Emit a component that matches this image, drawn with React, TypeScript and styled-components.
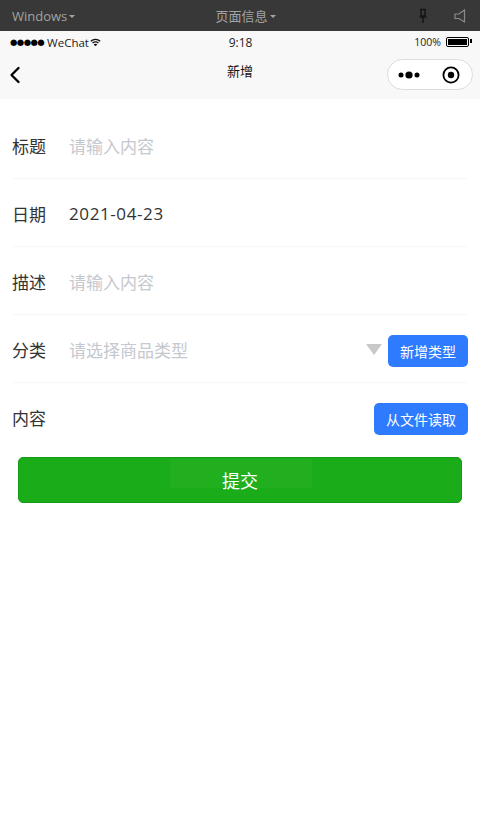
import React from 'react';
import { createGlobalStyle, styled } from 'styled-components';
import { ChevronLeft } from 'lucide-react';

const FONT = '"Open Sans", "Noto Sans CJK SC", sans-serif';

const GlobalStyle = createGlobalStyle`
  html, body {
    margin: 0;
    background: #ffffff;
    font-family: ${FONT};
  }
`;

// =============================================================================
// Main Component
// =============================================================================

export default function App() {
  return (
    <Page>
      <GlobalStyle />
      <Toolbar>
        <ToolbarMenu>
          Windows <Caret />
        </ToolbarMenu>
        <ToolbarTitle>
          页面信息 <Caret />
        </ToolbarTitle>
        <ToolbarIcons>
          <svg width="12" height="16" viewBox="0 0 12 16" fill="none" stroke="#141414" strokeWidth="1.4">
            <path d="M3 1.5h6M4 1.5v6.5M8 1.5v6.5M2.5 9h7M4 8h4M6 9v6" />
          </svg>
          <svg width="14" height="16" viewBox="0 0 14 16" fill="none" stroke="#8a8a8a" strokeWidth="1.2">
            <path d="M11.5 2v12L6 10.5H2V6h4z" />
          </svg>
        </ToolbarIcons>
      </Toolbar>
      <PhoneHeader>
        <StatusBar>
          <Carrier>
            <SignalDots>●●●●●</SignalDots>
            <CarrierName>WeChat</CarrierName>
            <svg width="11" height="9" viewBox="0 0 14 10" fill="none" stroke="#111" strokeWidth="1.6">
              <path d="M1 3.4C4.5.4 9.5.4 13 3.4M3.2 5.6c2.3-1.8 5.3-1.8 7.6 0" />
              <path d="M7 9.8 4.6 7.4c1.4-1 3.4-1 4.8 0z" fill="#111" stroke="none" />
            </svg>
          </Carrier>
          <Clock>9:18</Clock>
          <BatteryGroup>
            100%
            <Battery>
              <BatteryLevel />
            </Battery>
          </BatteryGroup>
        </StatusBar>
        <NavBar>
          <BackButton>
            <ChevronLeft size={28} strokeWidth={2} color="#000" />
          </BackButton>
          <NavTitle>新增</NavTitle>
          <Capsule>
            <svg width="24" height="10" viewBox="0 0 24 10" fill="#000">
              <circle cx="4" cy="5" r="2.5" />
              <circle cx="12" cy="5" r="3.6" />
              <circle cx="20" cy="5" r="2.5" />
            </svg>
            <svg width="18" height="18" viewBox="0 0 18 18">
              <circle cx="9" cy="9" r="7.6" fill="none" stroke="#000" strokeWidth="1.8" />
              <circle cx="9" cy="9" r="3.2" fill="#000" />
            </svg>
          </Capsule>
        </NavBar>
      </PhoneHeader>
      <Form>
        <Row>
          <Label>标题</Label>
          <Placeholder>请输入内容</Placeholder>
        </Row>
        <Row>
          <Label>日期</Label>
          <Value>2021-04-23</Value>
        </Row>
        <Row>
          <Label>描述</Label>
          <Placeholder>请输入内容</Placeholder>
        </Row>
        <Row>
          <Label>分类</Label>
          <Placeholder>请选择商品类型</Placeholder>
          <SelectArrow />
          <ActionButton>新增类型</ActionButton>
        </Row>
        <Row $last>
          <Label>内容</Label>
          <Spacer />
          <ActionButton>从文件读取</ActionButton>
        </Row>
      </Form>
      <SubmitButton>
        <SubmitGlow />
        <SubmitText>提交</SubmitText>
      </SubmitButton>
    </Page>
  );
}

// =============================================================================
// Styled Components
// =============================================================================

const Page = styled.div`
  width: 480px;
  min-height: 831px;
  background: #ffffff;
  overflow: hidden;
`;

const Toolbar = styled.div`
  height: 31px;
  display: grid;
  grid-template-columns: 1fr auto 1fr;
  align-items: center;
  padding: 0 13px 0 12px;
  background: #383838;
  color: #a3a3a3;
  font-size: 13px;
`;

const ToolbarMenu = styled.div`
  display: flex;
  align-items: center;
  gap: 2px;
`;

const ToolbarTitle = styled(ToolbarMenu)`
  margin-left: 12px;
`;

const Caret = styled.span`
  width: 0;
  height: 0;
  margin-top: 2px;
  border-left: 3px solid transparent;
  border-right: 3px solid transparent;
  border-top: 3px solid #a3a3a3;
`;

const ToolbarIcons = styled.div`
  display: flex;
  justify-content: flex-end;
  align-items: center;
  gap: 24px;
`;

const PhoneHeader = styled.div`
  height: 68px;
  background: #f8f8f8;
`;

const StatusBar = styled.div`
  height: 22px;
  display: grid;
  grid-template-columns: 1fr auto 1fr;
  align-items: center;
  padding: 0 9px 0 10px;
  color: #222222;
  font-size: 11px;
`;

const Carrier = styled.div`
  display: flex;
  align-items: center;
  gap: 3px;
`;

const SignalDots = styled.span`
  font-size: 8.5px;
  letter-spacing: -0.6px;
  color: #000000;
  font-family: "DejaVu Sans", sans-serif;
`;

const CarrierName = styled.span`
  font-size: 11.5px;
  margin-right: -2px;
`;

const Clock = styled.div`
  font-size: 12px;
`;

const BatteryGroup = styled.div`
  display: flex;
  justify-content: flex-end;
  align-items: center;
  gap: 5px;
  font-size: 10.5px;
`;

const Battery = styled.div`
  position: relative;
  width: 19px;
  height: 6px;
  margin-right: 2px;
  padding: 1px;
  border: 1px solid #000000;
  border-radius: 2px;

  &::after {
    content: '';
    position: absolute;
    right: -4px;
    top: 1px;
    width: 2px;
    height: 4px;
    background: #000000;
  }
`;

const BatteryLevel = styled.div`
  height: 100%;
  background: #000000;
`;

const NavBar = styled.div`
  height: 46px;
  display: grid;
  grid-template-columns: 1fr auto 1fr;
  align-items: center;
  padding: 0 7px;
`;

const BackButton = styled.div`
  display: flex;
  align-items: center;
  margin: 0 0 3px -6px;
`;

const NavTitle = styled.div`
  margin-bottom: 12px;
  color: #111111;
  font-size: 13px;
`;

const Capsule = styled.div`
  justify-self: end;
  box-sizing: border-box;
  width: 86px;
  height: 31px;
  margin-bottom: 3px;
  display: flex;
  align-items: center;
  justify-content: space-between;
  padding: 0 12px 0 9px;
  background: #ffffff;
  border: 1px solid #dddddd;
  border-radius: 16px;
`;

const Form = styled.div`
  padding: 12px 12px 0;
`;

const Row = styled.div<{ $last?: boolean }>`
  box-sizing: border-box;
  height: 68px;
  padding-top: 1px;
  display: flex;
  align-items: center;
  border-bottom: 1px solid ${({ $last }) => ($last ? 'transparent' : '#f7f7f7')};
`;

const Label = styled.div`
  width: 57px;
  flex: none;
  color: #333333;
  font-size: 17px;
`;

const Placeholder = styled.div`
  flex: 1;
  color: #c5c8ce;
  font-size: 17px;
`;

const Value = styled.div`
  flex: 1;
  color: #333333;
  font-size: 17px;
  letter-spacing: 0.6px;
`;

const Spacer = styled.div`
  flex: 1;
`;

const SelectArrow = styled.span`
  width: 0;
  height: 0;
  margin-right: 6px;
  border-left: 8px solid transparent;
  border-right: 8px solid transparent;
  border-top: 11px solid #c8c8c8;
`;

const ActionButton = styled.div`
  height: 32px;
  margin-top: 3px;
  display: flex;
  align-items: center;
  padding: 0 12px;
  background: #2f7bff;
  border-radius: 5px;
  color: #ffffff;
  font-size: 14px;
`;

const SubmitButton = styled.div`
  position: relative;
  box-sizing: border-box;
  height: 46px;
  margin: 6px 18px 0;
  display: flex;
  align-items: center;
  justify-content: center;
  background: #1aad19;
  border: 1px solid #179b16;
  border-radius: 5px;
  color: #ffffff;
  font-size: 18px;
`;

const SubmitGlow = styled.div`
  position: absolute;
  left: 151px;
  top: 1px;
  width: 142px;
  height: 29px;
  background: rgba(255, 255, 255, 0.03);
`;

const SubmitText = styled.span`
  position: relative;
`;
